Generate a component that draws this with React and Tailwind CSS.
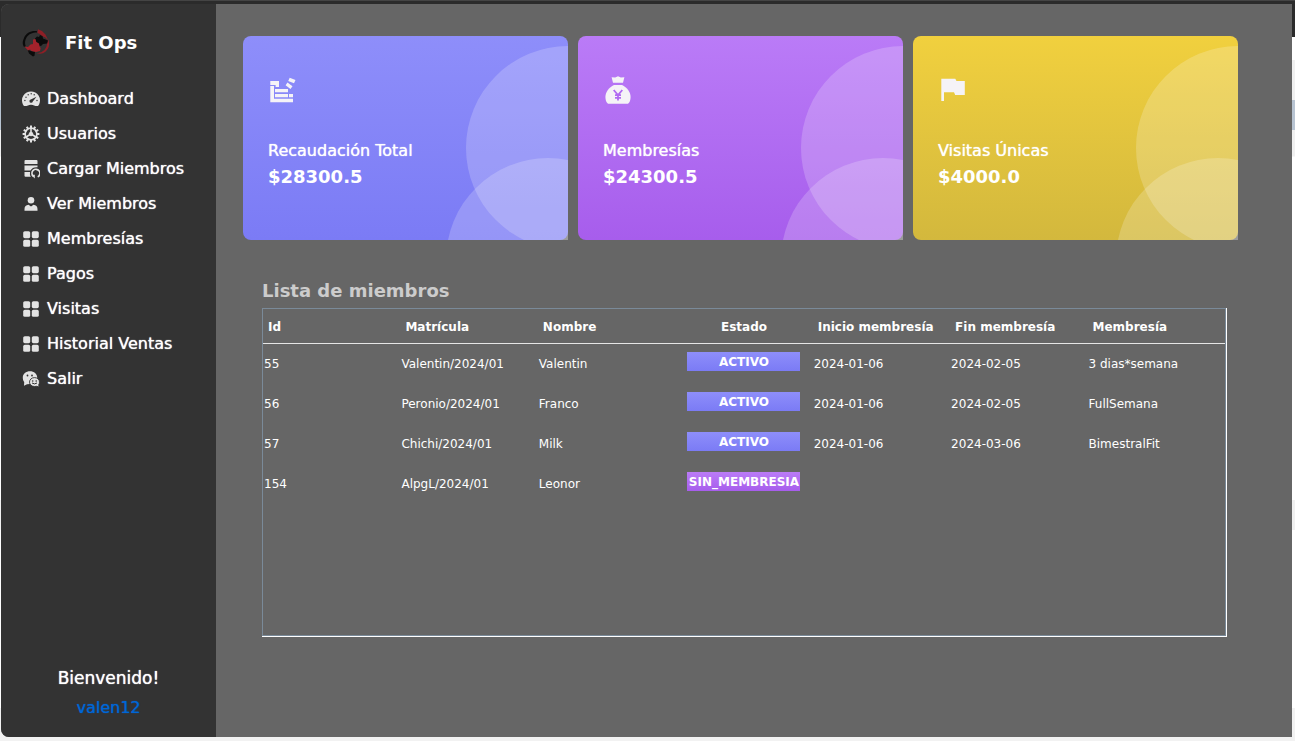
import React from "react";

function Logo() {
  return (
    <svg viewBox="0 0 28 28" className="size-7 shrink-0" aria-hidden="true">
      <path d="M15 2.200C9 1.500 4 4 2 9c-1.800 4-1.500 6 0 9l1.800-.5C2.500 14 3 11 4.500 8.500 7 4.800 10 3.400 15 3.400z" fill="#0b0b0b" />
      <path d="M5.500 20.500l3 1.500 4.500.7-.5 4-1.500.8-4-3z" fill="#0b0b0b" />
      <path d="M16 .3l4 1.700 3.500 3.500L26 11l-2.500-2.500-4-1.500-1.500-2-2.500-1z" fill="#8e1f26" />
      <path d="M26 10c2.500 5.500.8 11-4.500 14-2 1.100-4.500 1-7 .1 5.500-.3 8.500-2.800 10-6.600.8-2.500 1.200-5 1.500-7.500z" fill="#8e1f26" />
      <path d="M13 9.500L15 7.500l2 .5 1-2 2.500 1 .5 2.500 5 2-1 3-4 .5-2 2-2-.5-2-3-2-1z" fill="#0b0b0b" />
      <path d="M11 10.500l2.500-.5.8 3 2.700 1.500.5 3 1.200 1.500-.7 3-4 1-4.500-1L8 20.500l-2 1-3.500-4L6 18l2.500-2.500 2.500-.5z" fill="#a2222b" />
    </svg>
  );
}

function GaugeIcon() {
  return (
    <svg viewBox="0 0 18 18" className="size-[18px]" aria-hidden="true">
      <path d="M9 1.500a9 9 0 0 0-8.200 12.700c.6 1.300 1.200 1.800 2.200 1.800h1.500c1 0 1.500-1.300 4.500-1.300s3.500 1.300 4.500 1.300H15c1 0 1.600-.5 2.200-1.800A9 9 0 0 0 9 1.500z" fill="#e3e3e3" />
      <g fill="#333333">
        <circle cx="2.900" cy="10.500" r=".7" /><circle cx="4" cy="7.200" r=".7" /><circle cx="6.200" cy="4.700" r=".7" />
        <circle cx="9.200" cy="3.800" r=".7" /><circle cx="12.200" cy="4.700" r=".7" /><circle cx="15" cy="10.500" r=".7" />
        <path d="M14.500 6.800l-3.700 4.600a1.700 1.700 0 1 1-2-1.900z" />
      </g>
    </svg>
  );
}

function GearIcon() {
  const spokes = [0, 30, 60, 90, 120, 150];
  return (
    <svg viewBox="0 0 18 18" className="size-[18px]" fill="none" stroke="#e3e3e3" aria-hidden="true">
      {spokes.map((a) => (
        <path key={a} d="M9 .6v3M9 14.400v3" strokeWidth="2" transform={`rotate(${a} 9 9)`} />
      ))}
      <circle cx="9" cy="9" r="5.900" strokeWidth="1.700" />
      <path d="M9 3v6M9 9l-5 3M9 9l5 3" strokeWidth="1.600" />
      <circle cx="9" cy="9" r="1.800" fill="#e3e3e3" />
    </svg>
  );
}

function DatabaseIcon() {
  return (
    <svg viewBox="0 0 18 20" className="h-5 w-[18px]" aria-hidden="true">
      <g fill="#e3e3e3">
        <path d="M3.500 1h11q1 0 1 1v3H2.500V2q0-1 1-1z" />
        <path d="M2.500 6.500h13v1.700q-5-.5-7 3.300h-6z" />
        <path d="M2.500 13H8q-.5 2.800.8 4.800H3.500q-1 0-1-1z" />
      </g>
      <path d="M11.500 17.500a4 4 0 1 1 4.200.4" fill="none" stroke="#e3e3e3" strokeWidth="1.600" />
      <path d="M9 15.800h3.800v3.700z" fill="#e3e3e3" />
    </svg>
  );
}

function PersonIcon() {
  return (
    <svg viewBox="0 0 18 18" className="size-[18px]" fill="#e3e3e3" aria-hidden="true">
      <circle cx="9" cy="5.300" r="3.300" />
      <path d="M2.500 15.800v-1.700c0-2.600 1.500-4.100 4-4.300L9 11.500l2.500-1.700c2.500.2 4 1.700 4 4.300v1.700z" />
    </svg>
  );
}

function GridIcon() {
  return (
    <svg viewBox="0 0 18 18" className="size-[18px]" fill="#e3e3e3" aria-hidden="true">
      <rect x="1.200" y="1.200" width="7" height="7" rx="1.600" />
      <rect x="9.800" y="1.200" width="7" height="7" rx="1.600" />
      <rect x="1.200" y="9.800" width="7" height="7" rx="1.600" />
      <rect x="9.800" y="9.800" width="7" height="7" rx="1.600" />
    </svg>
  );
}

function ChatIcon() {
  return (
    <svg viewBox="0 0 18 18" className="size-[18px]" aria-hidden="true">
      <path d="M8 1.200c4 0 7.200 2.700 7.200 6.300S12 14 8 14l-3 .2-3 1.600.2-3.800C1.200 10.700.8 9.200.8 7.500.8 3.900 4 1.200 8 1.200z" fill="#e3e3e3" />
      <path d="M12.500 7.600c2.800 0 5 1.900 5 4.500 0 1.300-.4 2-.8 2.700l.5 2.300-2.400-.8-2.300.2c-2.800 0-5-1.900-5-4.400s2.200-4.500 5-4.500z" fill="#e3e3e3" stroke="#333333" strokeWidth=".9" />
      <g fill="#333333">
        <circle cx="5.500" cy="5.500" r=".9" /><circle cx="10" cy="5.500" r=".9" />
        <circle cx="10.700" cy="11" r=".8" /><circle cx="14.200" cy="11" r=".8" />
      </g>
      <path d="M10 13q2.500 1.800 5 0" fill="none" stroke="#333333" strokeWidth="1" />
    </svg>
  );
}

function StackIcon() {
  return (
    <svg viewBox="0 0 30 30" className="size-[30px]" fill="#f5f3f7" aria-hidden="true">
      <path d="M2.300 5H11v6H7.600V9H2.300zM2.300 10H6v12.700h19v3.600H2.300zM7 13h13v3.300H7zM7 18h13v3.300H7zM21 18h4v3.300h-4z" />
      <path d="M21.700 1.700l5.800 2.400-1.500 3.200-5.800-2.400zM19.500 6.500l5 3.700-2 2.700-4.900-3.700z" />
    </svg>
  );
}

function MoneyBagIcon() {
  return (
    <svg viewBox="0 0 30 30" className="size-[30px]" aria-hidden="true">
      <path d="M8.600 1.300l3.600.2L15 .2l2.800 1.300 3.600-.2L20 6.700H10z" fill="#f5f3f7" />
      <path d="M11 9h8c5 2.500 8.600 7 8.600 12 0 3-.8 5.200-2.600 6.700H5C3.200 26.200 2.400 24 2.400 21c0-5 3.600-9.500 8.600-12z" fill="#f5f3f7" />
      <path d="M10.700 14l4.300 5 4.300-5M15 19v5.500M12 19.200h6M12 21.800h6" fill="none" stroke="#b16bf2" strokeWidth="1.800" />
    </svg>
  );
}

function FlagIcon() {
  return (
    <svg viewBox="0 0 30 30" className="size-[30px]" fill="#f5f3f7" aria-hidden="true">
      <path d="M3.300 2.700h14L18.500 5h8.300v14h-9.600L16 16.300H6V25H3.300z" />
    </svg>
  );
}

const menu = [
  ["Dashboard", GaugeIcon],
  ["Usuarios", GearIcon],
  ["Cargar Miembros", DatabaseIcon],
  ["Ver Miembros", PersonIcon],
  ["Membresías", GridIcon],
  ["Pagos", GridIcon],
  ["Visitas", GridIcon],
  ["Historial Ventas", GridIcon],
  ["Salir", ChatIcon],
];

const members = [
  ["55", "Valentin/2024/01", "Valentin", "ACTIVO", "2024-01-06", "2024-02-05", "3 dias*semana"],
  ["56", "Peronio/2024/01", "Franco", "ACTIVO", "2024-01-06", "2024-02-05", "FullSemana"],
  ["57", "Chichi/2024/01", "Milk", "ACTIVO", "2024-01-06", "2024-03-06", "BimestralFit"],
  ["154", "AlpgL/2024/01", "Leonor", "SIN_MEMBRESIA", "", "", ""],
];

const columns = ["Id", "Matrícula", "Nombre", "Estado", "Inicio membresía", "Fin membresía", "Membresía"];

function Card({ icon, title, value, colors }) {
  return (
    <article className={`relative h-[204px] min-w-0 flex-1 rounded-lg bg-linear-to-b px-[25px] pt-10 text-white ${colors}`}>
      <div className="absolute inset-0 overflow-hidden">
        <div className="absolute -right-[102px] top-[10px] size-[204px] rounded-full bg-white/20" />
        <div className="absolute -right-[82px] top-[122px] size-[204px] rounded-full bg-white/20" />
      </div>
      <div className="relative">
        {icon}
        <h2 className="mt-[35px] text-base leading-5 [text-shadow:0_0_1px_currentColor]">{title}</h2>
        <p className="mt-1 text-lg leading-6 font-bold">{value}</p>
      </div>
    </article>
  );
}

function Status({ value }) {
  const tone = value === "ACTIVO" ? "from-[#8e8efa] to-[#7b7bf5]" : "from-[#ba7bf7] to-[#a75dec]";
  return (
    <span className={`mx-auto block h-[19px] w-[113px] bg-linear-to-b text-center text-xs leading-5 font-bold ${tone}`}>
      {value}
    </span>
  );
}

export default function App() {
  return (
    <div className="flex min-h-screen flex-col bg-[linear-gradient(#2b2b2b_37px,#ffffff_37px,#ffffff_60px,#f0f0f0_60px,#f0f0f0_100px,#b8c4d2_100px,#b8c4d2_130px,#f0f0f0_130px,#f0f0f0_156px,#ffffff_157px,#ffffff_500px,#f0f0f0_500px,#f0f0f0_530px,#ffffff_530px,#ffffff_708px,#f2f2f2_708px)] pr-[3px] pb-1 pl-px font-['DejaVu_Sans',sans-serif]">
      <div className="-mr-[3px] -ml-px h-1 border-t border-[#444444] bg-[#2b2b2b]" />
      <div className="flex flex-1 overflow-hidden rounded-l-lg bg-[#666666]">
        <aside className="flex w-[215px] shrink-0 flex-col bg-[#333333] text-white">
          <div className="flex items-center gap-[15px] pt-[25px] pl-[21px]">
            <Logo />
            <h1 className="text-lg leading-7 font-bold">Fit Ops</h1>
          </div>
          <nav className="mt-6">
            {menu.map(([label, Icon]) => (
              <a key={label} href="#" className="flex h-[35px] items-center gap-[7px] pl-[21px] text-base [text-shadow:0_0_1px_currentColor]">
                <Icon />
                {label}
              </a>
            ))}
          </nav>
          <div className="mt-auto pb-[14px] text-center [text-shadow:0_0_1px_currentColor]">
            <p className="text-[17px] leading-[30px]">Bienvenido!</p>
            <p className="text-base leading-[30px] text-[#0066d6]">valen12</p>
          </div>
        </aside>
        <main className="min-w-0 flex-1 pt-8 pl-[27px]">
          <section className="mr-[54px] flex gap-[10px]">
            <Card icon={<StackIcon />} title="Recaudación Total" value="$28300.5" colors="from-[#8e8efa] to-[#7b7bf5]" />
            <Card icon={<MoneyBagIcon />} title="Membresías" value="$24300.5" colors="from-[#ba7bf7] to-[#a75dec]" />
            <Card icon={<FlagIcon />} title="Visitas Únicas" value="$4000.0" colors="from-[#f1d03e] to-[#d3b83d]" />
          </section>
          <section className="mt-[38px] mr-[65px] ml-[19px]">
            <h2 className="text-lg leading-[26px] font-bold text-[#cccccc]">Lista de miembros</h2>
            <div className="mt-1 h-[329px] border-r border-b border-white">
              <div className="h-full border border-[#7a8a99]">
                <table className="w-full table-fixed border-collapse text-left text-xs text-white">
                  <thead>
                    <tr className="h-[34px] border-b border-[#e6e6e6]">
                      {columns.map((c) => (
                        <th key={c} className={c === "Estado" ? "pt-[2px] text-center" : "px-[5px] pt-[2px] whitespace-nowrap"}>{c}</th>
                      ))}
                    </tr>
                  </thead>
                  <tbody>
                    {members.map((row) => (
                      <tr key={row[0]} className="h-10">
                        {row.map((cell, i) => (
                          <td key={columns[i]} className={i === 3 ? "pb-1 align-middle" : "px-px pt-px"}>
                            {i === 3 ? <Status value={cell} /> : cell}
                          </td>
                        ))}
                      </tr>
                    ))}
                  </tbody>
                </table>
              </div>
            </div>
          </section>
        </main>
      </div>
    </div>
  );
}
